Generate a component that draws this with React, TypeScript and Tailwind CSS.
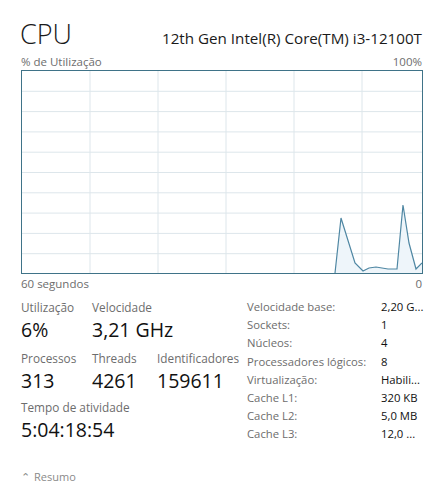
import React from 'react';

// utilisation samples, x/y in the plot's own 400x202 space
const SAMPLES: [number, number][] = [
  [313, 202], [319, 147], [333, 192], [341, 200], [347, 197], [354, 196],
  [366, 198], [375, 198], [381, 134], [387, 172], [394, 198], [400, 192],
];

const COLS = [68, 136, 204, 272, 340];
const ROWS = [20.3, 40.6, 60.9, 81.2, 101.5, 121.8, 142.1, 162.4, 182.7];

const CpuGraph: React.FC = () => {
  const line = SAMPLES.map(([x, y]) => `${x},${y}`).join(' ');
  const area = `${SAMPLES[0][0]},202 ${line} 400,202`;
  return (
    <div className="w-[402px] h-[204px] border border-[#3f7388] bg-white">
      <svg width="400" height="202" viewBox="0 0 400 202" className="block">
        {COLS.map((x) => (
          <line key={`c${x}`} x1={x} y1={0} x2={x} y2={202} stroke="#dde6eb" strokeWidth={1} />
        ))}
        {ROWS.map((y) => (
          <line key={`r${y}`} x1={0} y1={y} x2={400} y2={y} stroke="#dde6eb" strokeWidth={1} />
        ))}
        <polygon points={area} fill="#eef5fa" />
        <polyline points={line} fill="none" stroke="#4f87a3" strokeWidth={1.2} />
      </svg>
    </div>
  );
};

const Stat: React.FC<{ label: string; value: string; w: string }> = ({ label, value, w }) => (
  <div className={w}>
    <div className="text-[11.8px] leading-[18px] text-[#6d6d6d] whitespace-nowrap">{label}</div>
    <div className="text-[19.5px] leading-[24px] mt-[2px] text-[#111] whitespace-nowrap">{value}</div>
  </div>
);

const SPECS: [string, string][] = [
  ['Velocidade base:', '2,20 G...'],
  ['Sockets:', '1'],
  ['Núcleos:', '4'],
  ['Processadores lógicos:', '8'],
  ['Virtualização:', 'Habili...'],
  ['Cache L1:', '320 KB'],
  ['Cache L2:', '5,0 MB'],
  ['Cache L3:', '12,0 ...'],
];

export default function App() {
  return (
    <div
      className="w-[446px] h-[485px] bg-white pl-[21px] pr-[24px] pt-[15px]"
      style={{ fontFamily: '"Open Sans", "Noto Sans", sans-serif' }}
    >
      <div className="flex items-baseline justify-between">
        <span className="text-[27px] leading-[37px] font-light text-[#1a1a1a] -ml-[1px]">CPU</span>
        <span className="text-[15.2px] text-[#1a1a1a]">12th Gen Intel(R) Core(TM) i3-12100T</span>
      </div>

      <div className="flex justify-between text-[11.5px] leading-[16px] text-[#6d6d6d] mt-[2px]">
        <span>% de Utilização</span>
        <span>100%</span>
      </div>

      <CpuGraph />

      <div className="flex justify-between text-[11.5px] leading-[18px] text-[#6d6d6d] mt-[1px]">
        <span>60 segundos</span>
        <span>0</span>
      </div>

      <div className="flex mt-[5px]">
        <div className="w-[226px] shrink-0">
          <div className="flex">
            <Stat w="w-[71px]" label="Utilização" value="6%" />
            <Stat w="w-[120px]" label="Velocidade" value="3,21 GHz" />
          </div>
          <div className="flex mt-[7px]">
            <Stat w="w-[71px]" label="Processos" value="313" />
            <Stat w="w-[65px]" label="Threads" value="4261" />
            <Stat w="w-[90px]" label="Identificadores" value="159611" />
          </div>
          <div className="flex mt-[5px]">
            <Stat w="w-[200px]" label="Tempo de atividade" value="5:04:18:54" />
          </div>
        </div>

        <div className="text-[11.3px] leading-[18.2px] whitespace-nowrap">
          {SPECS.map(([k, v]) => (
            <div key={k} className="flex">
              <span className="w-[134px] shrink-0 text-[#6d6d6d]">{k}</span>
              <span className="text-[#111]">{v}</span>
            </div>
          ))}
        </div>
      </div>

      <div className="mt-[26px] text-[11px] leading-[14px] text-[#8a8a8a]">
        <span className="mr-1">⌃</span>Resumo
      </div>
    </div>
  );
}
